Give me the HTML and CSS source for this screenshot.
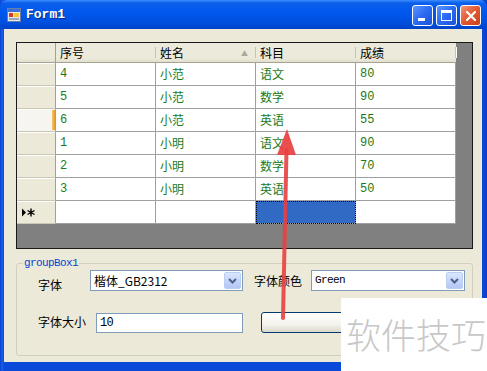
FILE: index.html
```html
<!DOCTYPE html>
<html lang="zh-CN">
<head>
  <meta charset="UTF-8" />
  <title>Form1</title>
  <link rel="stylesheet" href="styles.css">
</head>
<body>
  <div class="window">
    <div class="titlebar">
      <svg class="app-icon" width="14" height="14" viewBox="0 0 14 14">
        <rect x="0.5" y="0.5" width="13" height="13" fill="#e8e8e8" stroke="#6a7da8"/>
        <rect x="1" y="1" width="12" height="3" fill="#3d6fd8"/>
        <rect x="2" y="5" width="4" height="4" fill="#d83a2a"/>
        <rect x="7" y="5" width="5" height="4" fill="#f2c43a"/>
        <rect x="2" y="10" width="10" height="2" fill="#9aa6bd"/>
      </svg>
      <span class="title">Form1</span>
      <div class="controls">
        <button class="ctl"><span class="min-glyph"></span></button>
        <button class="ctl"><span class="max-glyph"></span></button>
        <button class="ctl close">
          <svg width="12" height="12" viewBox="0 0 12 12"><path d="M2 2 L10 10 M10 2 L2 10" stroke="#fff" stroke-width="2.2" stroke-linecap="round"/></svg>
        </button>
      </div>
    </div>

    <div class="client">
      <div class="grid-view">
        <div class="dgv">
          <div class="hd corner"></div>
          <div class="hd">序号</div>
          <div class="hd sorted">姓名<span class="sort">▲</span></div>
          <div class="hd">科目</div>
          <div class="hd">成绩</div>

          <div class="rh"></div>
          <div class="cell">4</div><div class="cell">小范</div><div class="cell">语文</div><div class="cell">80</div>

          <div class="rh"></div>
          <div class="cell">5</div><div class="cell">小范</div><div class="cell">数学</div><div class="cell">90</div>

          <div class="rh current"></div>
          <div class="cell">6</div><div class="cell">小范</div><div class="cell">英语</div><div class="cell">55</div>

          <div class="rh"></div>
          <div class="cell">1</div><div class="cell">小明</div><div class="cell">语文</div><div class="cell">90</div>

          <div class="rh"></div>
          <div class="cell">2</div><div class="cell">小明</div><div class="cell">数学</div><div class="cell">70</div>

          <div class="rh"></div>
          <div class="cell">3</div><div class="cell">小明</div><div class="cell">英语</div><div class="cell">50</div>

          <div class="rh newrow">
            <svg width="14" height="9" viewBox="0 0 14 9">
              <path d="M1 0.5 L5 4.5 L1 8.5 Z" fill="#000"/>
              <path d="M10 0.5 V8.5 M6.5 2.5 L13.5 6.5 M13.5 2.5 L6.5 6.5" stroke="#000" stroke-width="1.4"/>
            </svg>
          </div>
          <div class="cell"></div><div class="cell"></div><div class="cell selected"></div><div class="cell"></div>
        </div>
      </div>

      <fieldset class="group">
        <legend>groupBox1</legend>
        <div class="row first">
          <span class="lbl lbl-font">字体</span>
          <div class="combo narrow">
            <span class="combo-text">楷体_GB2312</span>
            <span class="drop"><svg width="9" height="6" viewBox="0 0 9 6"><path d="M1 1 L4.5 4.5 L8 1" fill="none" stroke="#4d6185" stroke-width="2"/></svg></span>
          </div>
          <span class="lbl lbl-color">字体颜色</span>
          <div class="combo wide">
            <span class="combo-text mono">Green</span>
            <span class="drop"><svg width="9" height="6" viewBox="0 0 9 6"><path d="M1 1 L4.5 4.5 L8 1" fill="none" stroke="#4d6185" stroke-width="2"/></svg></span>
          </div>
        </div>
        <div class="row second">
          <span class="lbl lbl-size">字体大小</span>
          <div class="textbox">10</div>
          <button class="btn"></button>
        </div>
      </fieldset>
    </div>

    <svg class="arrow" width="40" height="200" viewBox="0 0 40 200">
      <path d="M17 190 L20.5 22" stroke="rgba(232,64,64,0.9)" stroke-width="4" stroke-linecap="round"/>
      <path d="M21 1 L30 27 L11 27 Z" fill="rgba(232,64,64,0.92)"/>
    </svg>

    <div class="watermark">软件技巧</div>
  </div>
</body>
</html>
```

FILE: styles.css
```css
* {
  box-sizing: border-box;
  margin: 0;
  padding: 0;
}

body {
  width: 487px;
  height: 371px;
  overflow: hidden;
  background: #0b4ad8;
  font-family: "Noto Sans CJK SC", "Liberation Sans", sans-serif;
  font-size: 12px;
}

.window {
  position: relative;
  width: 487px;
  height: 371px;
  display: flex;
  flex-direction: column;
  background: linear-gradient(90deg, #0a3fc8 0, #1660f0 2px, #0b4ad8 4px, #0b4ad8 calc(100% - 5px), #0a3fc8 100%);
}

/* Title bar */
.titlebar {
  height: 29px;
  display: flex;
  align-items: center;
  padding: 0 6px 0 7px;
  background: linear-gradient(#3d8cff 0, #0a5fea 3px, #0058ee 40%, #0050e0 75%, #0043c8 100%);
  border-radius: 7px 7px 0 0;
}

.app-icon {
  flex: none;
}

.title {
  margin-left: 5px;
  color: #fff;
  font-family: "Liberation Mono", monospace;
  font-weight: bold;
  font-size: 13px;
  text-shadow: 1px 1px 0 #0a2a8a;
}

.controls {
  margin-left: auto;
  display: flex;
  gap: 3px;
  margin-top: 2px;
}

.ctl {
  width: 21px;
  height: 21px;
  border: 1px solid #fff;
  border-radius: 3px;
  background: linear-gradient(135deg, #5c95ff 0, #2a6af2 50%, #1b52d6 100%);
  display: flex;
  align-items: center;
  justify-content: center;
  position: relative;
}

.ctl.close {
  background: linear-gradient(135deg, #f0957a 0, #e3582f 50%, #c8401c 100%);
}

.min-glyph {
  position: absolute;
  left: 5px;
  bottom: 4px;
  width: 7px;
  height: 3px;
  background: #fff;
}

.max-glyph {
  width: 11px;
  height: 11px;
  border: 1px solid #fff;
  border-top-width: 3px;
}

/* Client area */
.client {
  flex: 1;
  margin: 0 5px 9px 4px;
  background: #ece9d8;
  padding: 13px 9px 0 12px;
}

.grid-view {
  height: 207px;
  border: 1px solid #1a1a1a;
  background: #808080;
}

.dgv {
  display: grid;
  grid-template-columns: 39px repeat(4, 100px);
  grid-template-rows: 20px;
  grid-auto-rows: 23px;
  width: max-content;
}

.hd {
  display: flex;
  align-items: center;
  justify-content: space-between;
  padding: 0 4px;
  background: linear-gradient(#ebeadb 0, #ebeadb 80%, #e2dfcf 100%);
  border-bottom: 1px solid #a7a38e;
  position: relative;
  color: #000;
}

.hd::after {
  content: "";
  position: absolute;
  right: 0;
  top: 4px;
  bottom: 4px;
  width: 1px;
  background: #c7c5b2;
  box-shadow: 1px 0 0 #fff;
}

.hd.corner::after {
  display: none;
}

.corner {
  border-right: 1px solid #a0a0a0;
}

.sort {
  color: #aca899;
  font-size: 7px;
  margin-right: 4px;
}

.rh {
  background: #ece9d8;
  border-bottom: 1px solid #c9c6b4;
  border-right: 1px solid #a0a0a0;
  box-shadow: inset 0 1px 0 #fff;
  position: relative;
}

.rh.current {
  background: #f6f5ef;
}

.rh.current::after {
  content: "";
  position: absolute;
  right: 0;
  top: 1px;
  bottom: 1px;
  width: 3px;
  background: linear-gradient(90deg, #f8c874, #e59a1f);
}

.rh.newrow {
  display: flex;
  align-items: center;
  padding-left: 4px;
}

.cell {
  background: #fff;
  border-right: 1px solid #a0a0a0;
  border-bottom: 1px solid #a0a0a0;
  color: #1a7a1a;
  display: flex;
  align-items: center;
  padding-left: 4px;
  font-family: "Liberation Mono", "Noto Sans CJK SC", monospace;
  font-size: 12px;
}

.cell.selected {
  background: #316ac5;
  outline: 1px dotted #000;
  outline-offset: -1px;
}

/* Group box */
.group {
  margin-top: 8px;
  width: 457px;
  height: 99px;
  border: 1px solid #d0d0bf;
  border-radius: 3px;
  padding: 0;
}

.group legend {
  margin-left: 6px;
  padding: 0 1px;
  color: #0046d5;
  font-family: "Liberation Mono", monospace;
  font-size: 11px;
  letter-spacing: -0.6px;
  line-height: 12px;
}

.row {
  display: flex;
  align-items: flex-start;
  padding-left: 21px;
}

.row.first {
  margin-top: 1px;
}

.row.second {
  margin-top: 22px;
}

.lbl {
  line-height: 12px;
  color: #000;
  font-size: 12px;
}

.lbl-font {
  width: 52px;
  margin-top: 9px;
}

.lbl-color {
  margin-left: 11px;
  width: 57px;
  margin-top: 5px;
}

.lbl-size {
  width: 58px;
  margin-top: 3px;
}

.combo {
  height: 21px;
  background: #fff;
  border: 1px solid #7f9db9;
  display: flex;
  align-items: center;
  justify-content: space-between;
  padding: 1px;
}

.combo.narrow {
  width: 153px;
}

.combo.wide {
  width: 154px;
}

.combo-text {
  padding-left: 2px;
  line-height: 17px;
}

.combo-text.mono {
  font-family: "Liberation Mono", monospace;
  font-size: 11px;
  letter-spacing: -0.6px;
}

.drop {
  width: 17px;
  height: 17px;
  border: 1px solid #b9cdf5;
  border-radius: 2px;
  background: linear-gradient(#dbe6fe 0, #c1d3fb 60%, #b4c8f5 100%);
  display: flex;
  align-items: center;
  justify-content: center;
}

.textbox {
  width: 147px;
  height: 20px;
  background: #fff;
  border: 1px solid #7f9db9;
  padding-left: 3px;
  line-height: 18px;
  font-family: "Liberation Mono", monospace;
  font-size: 12px;
  letter-spacing: -0.8px;
}

.btn {
  margin-left: 18px;
  margin-top: -1px;
  width: 86px;
  height: 21px;
  border: 1px solid #003c74;
  border-radius: 3px;
  background: linear-gradient(#ffffff 0, #f4f3ee 60%, #dcd9cb 100%);
}

/* Overlays */
.arrow {
  position: absolute;
  left: 266px;
  top: 128px;
}

.watermark {
  position: absolute;
  left: 341px;
  top: 298px;
  right: 0;
  bottom: 0;
  background: #fff;
  color: #c8c8c8;
  font-family: "Noto Sans CJK SC", sans-serif;
  font-weight: 300;
  font-size: 35px;
  line-height: 72px;
  padding-left: 5px;
  white-space: nowrap;
}
```
